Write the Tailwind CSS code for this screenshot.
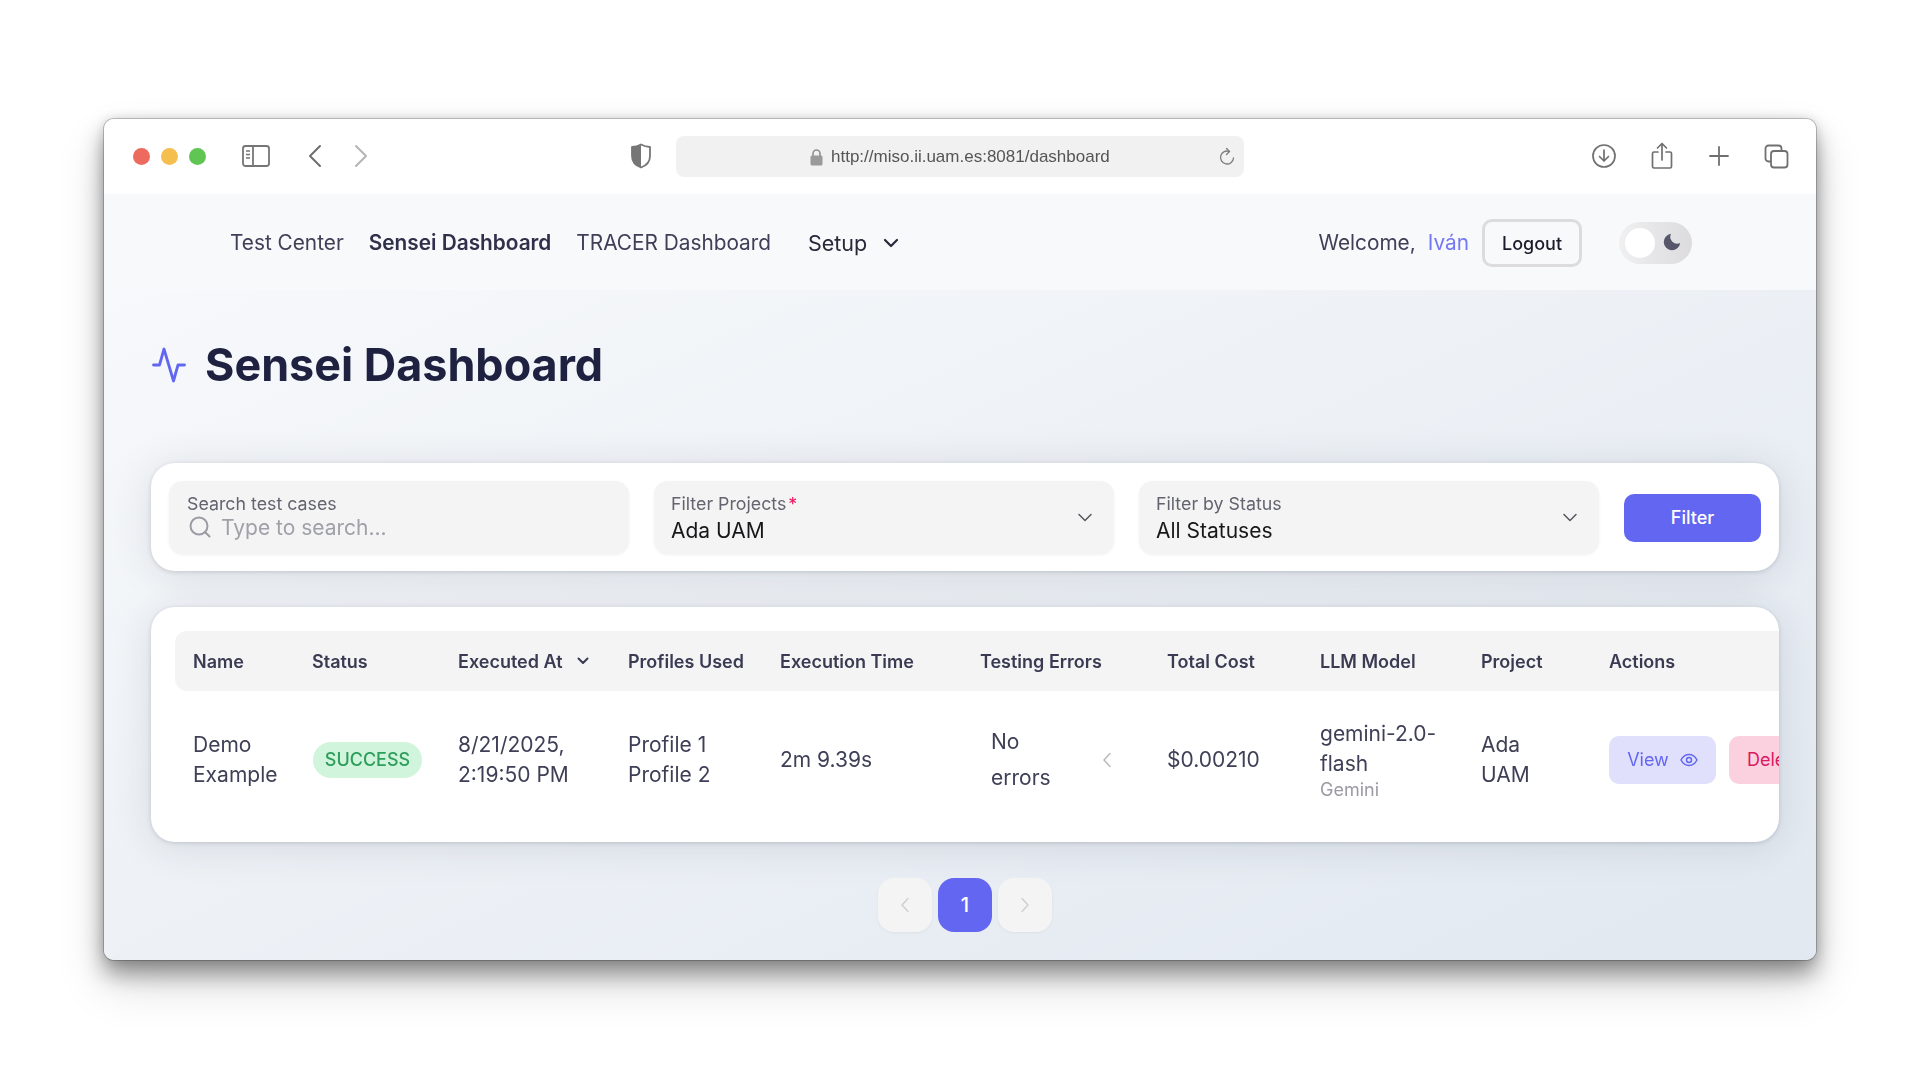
<!DOCTYPE html>
<html lang="en">

<head>
    <meta charset="UTF-8">
    <meta name="viewport" content="width=device-width, initial-scale=1.0">
    <script src="https://cdn.jsdelivr.net/npm/@tailwindcss/browser@4"></script>
    <title>Sensei Dashboard</title>
</head>

<body class="bg-white font-['Inter',sans-serif] overflow-hidden">
    <div class="w-[1920px] h-[1080px] pt-[119px] pl-[104px]">
        <!-- browser window -->
        <div class="w-[1712px] h-[841px] flex flex-col rounded-[10px] overflow-hidden bg-white shadow-[0_0_0_1px_rgba(0,0,0,0.2),0_14px_22px_rgba(0,0,0,0.38),0_24px_50px_rgba(0,0,0,0.14),0_0_12px_rgba(0,0,0,0.15)]">
            <!-- safari toolbar -->
            <div class="h-[75px] shrink-0 flex items-center bg-white relative pb-[1px] blur-[0.4px]">
                <div class="flex items-center gap-[11px] ml-[29px]">
                    <span class="w-[17px] h-[17px] rounded-full bg-[#ed6a5e]"></span>
                    <span class="w-[17px] h-[17px] rounded-full bg-[#f4bf4f]"></span>
                    <span class="w-[17px] h-[17px] rounded-full bg-[#61c554]"></span>
                </div>
                <svg class="ml-[36px]" width="28" height="24" viewBox="0 0 28 24" fill="none" stroke="#767676" stroke-width="1.8">
                    <rect x="1" y="2" width="26" height="20" rx="2.5" />
                    <path d="M11 2v20" />
                    <path d="M4 7h4M4 10.5h4M4 14h4" stroke-width="1.5" />
                </svg>
                <svg class="ml-[38px]" width="14" height="24" viewBox="0 0 14 24" fill="none" stroke="#6e6e6e" stroke-width="2" stroke-linecap="round" stroke-linejoin="round">
                    <path d="M12 2 2 12l10 10" />
                </svg>
                <svg class="ml-[32px]" width="14" height="24" viewBox="0 0 14 24" fill="none" stroke="#b4b4b4" stroke-width="2" stroke-linecap="round" stroke-linejoin="round">
                    <path d="m2 2 10 10L2 22" />
                </svg>
                <svg class="ml-[262px]" width="22" height="26" viewBox="0 0 22 26" fill="none">
                    <path d="M11 1.5c3 1.6 6 2.3 9 2.5v9c0 5.500-3.500 9.500-9 11.500C5.500 22.500 2 18.500 2 13V4c3-.2 6-.9 9-2.500Z" stroke="#767676" stroke-width="1.8" stroke-linejoin="round" />
                    <path d="M11 1.500V24.500C5.500 22.500 2 18.500 2 13V4c3-.2 6-.9 9-2.500Z" fill="#767676" />
                </svg>
                <!-- address bar -->
                <div class="ml-[24px] w-[568px] h-[41px] rounded-[8px] bg-[#f1f1f1] flex items-center relative">
                    <div class="flex items-center gap-[8px] ml-[134px] pt-[2px] text-[#555] text-[17px] font-['Liberation_Sans',sans-serif]">
                        <svg width="13" height="17" viewBox="0 0 13 17" fill="none">
                            <path d="M3 7V4.500a3.500 3.500 0 0 1 7 0V7" stroke="#8f8f8f" stroke-width="1.600" />
                            <rect x="0.500" y="6.500" width="12" height="10" rx="1.500" fill="#9a9a9a" />
                        </svg>
                        <span>http://miso.ii.uam.es:8081/dashboard</span>
                    </div>
                    <svg class="absolute right-[9px] top-[11px]" width="16" height="20" viewBox="0 0 16 20" fill="none" stroke="#7c7c7c" stroke-width="1.300" stroke-linecap="round" stroke-linejoin="round">
                        <path d="M10.500 4.500A6.500 6.500 0 1 0 14.500 11" />
                        <path d="M7.500 1.500l3 3-3 3" />
                    </svg>
                </div>
                <!-- right toolbar icons -->
                <div class="absolute left-[1488px] top-0 h-full pb-[1px] flex items-center">
                    <svg width="24" height="24" viewBox="0 0 24 24" fill="none" stroke="#707070" stroke-width="1.700" stroke-linecap="round" stroke-linejoin="round">
                        <circle cx="12" cy="12" r="11" />
                        <path d="M12 6v11M7.500 12.500 12 17l4.500-4.500" />
                    </svg>
                    <svg class="ml-[35px]" width="22" height="28" viewBox="0 0 22 28" fill="none" stroke="#707070" stroke-width="1.700" stroke-linecap="round" stroke-linejoin="round">
                        <path d="M11 18V2M6.500 6 11 1.500 15.500 6" />
                        <path d="M7 10H3a1.500 1.500 0 0 0-1.500 1.500v13A1.500 1.500 0 0 0 3 26h16a1.500 1.500 0 0 0 1.500-1.500v-13A1.500 1.500 0 0 0 19 10h-4" />
                    </svg>
                    <svg class="ml-[36px]" width="20" height="20" viewBox="0 0 20 20" fill="none" stroke="#707070" stroke-width="1.800" stroke-linecap="round">
                        <path d="M10 1v18M1 10h18" />
                    </svg>
                    <svg class="ml-[35px]" width="25" height="25" viewBox="0 0 25 25" fill="none" stroke="#707070" stroke-width="1.800" stroke-linejoin="round">
                        <rect x="7" y="7" width="16.500" height="16.500" rx="3" />
                        <path d="M7 17.500H4.500a3 3 0 0 1-3-3v-10a3 3 0 0 1 3-3h10a3 3 0 0 1 3 3V7" />
                    </svg>
                </div>
            </div>

            <!-- page -->
            <div class="flex-1 bg-linear-to-br from-slate-50 to-slate-200">
                <div class="blur-[0.4px]">
                    <nav class="h-[96px] pt-[2px] bg-[#f8f9fb] flex items-center justify-between pl-[126px] pr-[124px] text-[20.800px] text-[#3f4057]">
                        <div class="flex items-center">
                            <a>Test Center</a>
                            <a class="ml-[25px] font-semibold text-[#2f3049]">Sensei Dashboard</a>
                            <a class="ml-[25px]">TRACER Dashboard</a>
                            <a class="ml-[37px] text-[21.500px] text-[#27283a]">Setup</a>
                            <svg class="ml-[16px]" width="16" height="10" viewBox="0 0 16 10" fill="none" stroke="#27283a" stroke-width="2.200" stroke-linecap="round" stroke-linejoin="round">
                                <path d="m2 2 6 6 6-6" />
                            </svg>
                        </div>
                        <div class="flex items-center">
                            <span>Welcome,</span>
                            <span class="ml-[12px] text-[#7477f5]">Iván</span>
                            <button class="ml-[13px] w-[100px] h-[48px] rounded-[10px] border-[3px] border-[#dcdcde] text-[18px] font-medium text-[#1b1c2a]">Logout</button>
                            <div class="ml-[37px] w-[73px] h-[42px] rounded-full bg-linear-to-r from-[#f0f0f1] to-[#dcdcdf] flex items-center pl-[6px] relative">
                                <span class="w-[30px] h-[30px] rounded-full bg-white"></span>
                                <svg class="absolute left-[41px] top-[10px]" width="22" height="22" viewBox="0 0 24 24" fill="#55566a">
                                    <path d="M12 2a9 9 0 1 0 10 10 7.500 7.500 0 0 1-10-10Z" />
                                </svg>
                            </div>
                        </div>
                    </nav>

                    <main class="pl-[47px] pr-[37px]">
                        <div class="flex items-center h-[150px]">
                            <svg class="ml-[1px]" width="34" height="36" viewBox="0 0 34 36" fill="none" stroke="#6366f1" stroke-width="2.800" stroke-linecap="round" stroke-linejoin="round">
                                <path d="M1.500 18h6l4.500-16 9.500 32 4.500-16h6.500" />
                            </svg>
                            <h1 class="ml-[19px] pt-[2px] text-[44.900px] font-bold text-[#1e2140]">Sensei Dashboard</h1>
                        </div>

                        <!-- filters -->
                        <div class="mt-[23px] h-[108px] rounded-[24px] bg-white shadow-[0_1px_4px_rgba(60,70,90,0.2),0_4px_40px_rgba(30,41,59,0.12)] flex items-center px-[18px] gap-[25px]">
                            <div class="w-[460px] h-[73px] rounded-[14px] bg-[#f4f4f4] shadow-[0_1px_3px_rgba(0,0,0,0.06)] px-[18px] pt-[12px]">
                                <div class="text-[17.800px] leading-[21px] text-[#63646f]">Search test cases</div>
                                <div class="flex items-center gap-[10px] text-[21px] leading-[27px] text-[#a0a1a8]">
                                    <svg class="ml-[2px]" width="22" height="22" viewBox="0 0 22 22" fill="none" stroke="#9b9ca3" stroke-width="2" stroke-linecap="round">
                                        <circle cx="10" cy="10" r="8.500" />
                                        <path d="m16.500 16.500 4 4" />
                                    </svg>
                                    <span>Type to search...</span>
                                </div>
                            </div>
                            <div class="w-[460px] h-[73px] rounded-[14px] bg-[#f4f4f4] shadow-[0_1px_3px_rgba(0,0,0,0.06)] pl-[17px] pr-[22px] flex items-center justify-between">
                                <div class="pt-[3px]">
                                    <div class="text-[17.800px] leading-[21px] text-[#63646f]">Filter Projects<span class="text-[#f31260] ml-[2px]">*</span></div>
                                    <div class="mt-[3px] text-[21px] leading-[27px] text-[#18181b]">Ada UAM</div>
                                </div>
                                <svg width="14" height="9" viewBox="0 0 14 9" fill="none" stroke="#55565f" stroke-width="1.500" stroke-linecap="round" stroke-linejoin="round">
                                    <path d="m1 1.500 6 6 6-6" />
                                </svg>
                            </div>
                            <div class="w-[460px] h-[73px] rounded-[14px] bg-[#f4f4f4] shadow-[0_1px_3px_rgba(0,0,0,0.06)] pl-[17px] pr-[22px] flex items-center justify-between">
                                <div class="pt-[3px]">
                                    <div class="text-[17.800px] leading-[21px] text-[#63646f]">Filter by Status</div>
                                    <div class="mt-[3px] text-[21px] leading-[27px] text-[#18181b]">All Statuses</div>
                                </div>
                                <svg width="14" height="9" viewBox="0 0 14 9" fill="none" stroke="#55565f" stroke-width="1.500" stroke-linecap="round" stroke-linejoin="round">
                                    <path d="m1 1.500 6 6 6-6" />
                                </svg>
                            </div>
                            <button class="w-[137px] h-[48px] mt-[1px] rounded-[10px] bg-[#6366f1] text-white text-[18px] font-medium">Filter</button>
                        </div>

                        <!-- results table -->
                        <div class="mt-[36px] h-[235px] rounded-[24px] bg-white shadow-[0_1px_4px_rgba(60,70,90,0.2),0_4px_40px_rgba(30,41,59,0.12)] pl-[24px] pt-[24px] overflow-hidden">
                            <table class="table-fixed w-[1604px] border-collapse text-left">
                                <thead>
                                    <tr class="h-[60px] text-[18px] font-semibold text-[#3a3b52]">
                                        <th class="w-[120px] pl-[18px] bg-[#f4f4f4] rounded-l-[12px] font-semibold">Name</th>
                                        <th class="w-[146px] pl-[17px] bg-[#f4f4f4] font-semibold">Status</th>
                                        <th class="w-[170px] pl-[17px] bg-[#f4f4f4] font-semibold">
                                            <div class="flex items-center gap-[14px]">Executed At
                                                <svg width="12" height="8" viewBox="0 0 12 8" fill="none" stroke="#3a3b52" stroke-width="2" stroke-linecap="round" stroke-linejoin="round">
                                                    <path d="m1.500 1.500 4.500 4.500 4.500-4.500" />
                                                </svg>
                                            </div>
                                        </th>
                                        <th class="w-[152px] pl-[17px] bg-[#f4f4f4] font-semibold">Profiles Used</th>
                                        <th class="w-[200px] pl-[17px] bg-[#f4f4f4] font-semibold">Execution Time</th>
                                        <th class="w-[187px] pl-[17px] bg-[#f4f4f4] font-semibold">Testing Errors</th>
                                        <th class="w-[153px] pl-[17px] bg-[#f4f4f4] font-semibold">Total Cost</th>
                                        <th class="w-[160px] pl-[17px] bg-[#f4f4f4] font-semibold">LLM Model</th>
                                        <th class="w-[129px] pl-[18px] bg-[#f4f4f4] font-semibold">Project</th>
                                        <th class="w-[187px] pl-[17px] bg-[#f4f4f4] font-semibold">Actions</th>
                                    </tr>
                                </thead>
                                <tbody>
                                    <tr class="h-[137px] text-[21px] leading-[30px] text-[#3f4057]">
                                        <td class="pl-[18px] pt-[1px]">Demo Example</td>
                                        <td class="pl-[18px]">
                                            <span class="inline-flex items-center justify-center w-[109px] h-[36px] rounded-full bg-[#d1f4dc] text-[#2f9e5b] text-[18px] font-medium">SUCCESS</span>
                                        </td>
                                        <td class="pl-[17px] pt-[1px]">8/21/2025, 2:19:50 PM</td>
                                        <td class="pl-[17px] pt-[1px]">Profile 1<br>Profile 2</td>
                                        <td class="pl-[17px] pt-[1px]">2m 9.39s</td>
                                        <td class="pl-[17px] pt-[1px]">
                                            <div class="flex items-center pl-[11px]">
                                                <span class="w-[70px] leading-[36px]">No errors</span>
                                                <svg class="ml-[41px]" width="10" height="16" viewBox="0 0 10 16" fill="none" stroke="#b9b9bd" stroke-width="1.500" stroke-linecap="round" stroke-linejoin="round">
                                                    <path d="M8 1.500 2 8l6 6.500" />
                                                </svg>
                                            </div>
                                        </td>
                                        <td class="pl-[17px] pt-[1px]">$0.00210</td>
                                        <td class="pl-[17px] pb-[1px]">
                                            <div>gemini-2.0-flash</div>
                                            <div class="text-[18px] leading-[21px] text-[#9a9ba3]">Gemini</div>
                                        </td>
                                        <td class="pl-[18px] pt-[1px]">Ada<br>UAM</td>
                                        <td class="pl-[17px]">
                                            <div class="flex items-center gap-[13px] whitespace-nowrap">
                                                <button class="w-[107px] h-[48px] shrink-0 rounded-[10px] bg-[#e0e0fc] text-[#6366f1] text-[18px] flex items-center justify-center gap-[11px]">View
                                                    <svg width="18" height="14" viewBox="0 0 18 14" fill="none" stroke="#6366f1" stroke-width="1.500">
                                                        <path d="M1 7c2-3.700 4.800-5.500 8-5.500S15 3.300 17 7c-2 3.700-4.800 5.500-8 5.500S3 10.700 1 7Z" />
                                                        <circle cx="9" cy="7" r="2.500" />
                                                    </svg>
                                                </button>
                                                <button class="h-[48px] shrink-0 px-[18px] rounded-[10px] bg-[#fbd0df] text-[#d9195f] text-[18px]">Delete</button>
                                            </div>
                                        </td>
                                    </tr>
                                </tbody>
                            </table>
                        </div>

                        <!-- pagination -->
                        <div class="mt-[36px] flex justify-center gap-[6px] text-[20px]">
                            <button class="w-[54px] h-[54px] rounded-[16px] bg-[#f4f4f5] shadow-[0_1px_3px_rgba(0,0,0,0.05)] flex items-center justify-center">
                                <svg width="10" height="16" viewBox="0 0 10 16" fill="none" stroke="#d0d0d3" stroke-width="1.500" stroke-linecap="round" stroke-linejoin="round">
                                    <path d="M8 1.500 2 8l6 6.500" />
                                </svg>
                            </button>
                            <button class="w-[54px] h-[54px] rounded-[16px] bg-[#6366f1] text-white font-medium">1</button>
                            <button class="w-[54px] h-[54px] rounded-[16px] bg-[#f4f4f5] shadow-[0_1px_3px_rgba(0,0,0,0.05)] flex items-center justify-center">
                                <svg width="10" height="16" viewBox="0 0 10 16" fill="none" stroke="#d0d0d3" stroke-width="1.500" stroke-linecap="round" stroke-linejoin="round">
                                    <path d="m2 1.500 6 6.500-6 6.500" />
                                </svg>
                            </button>
                        </div>
                    </main>
                </div>
            </div>
        </div>
    </div>
</body>

</html>
